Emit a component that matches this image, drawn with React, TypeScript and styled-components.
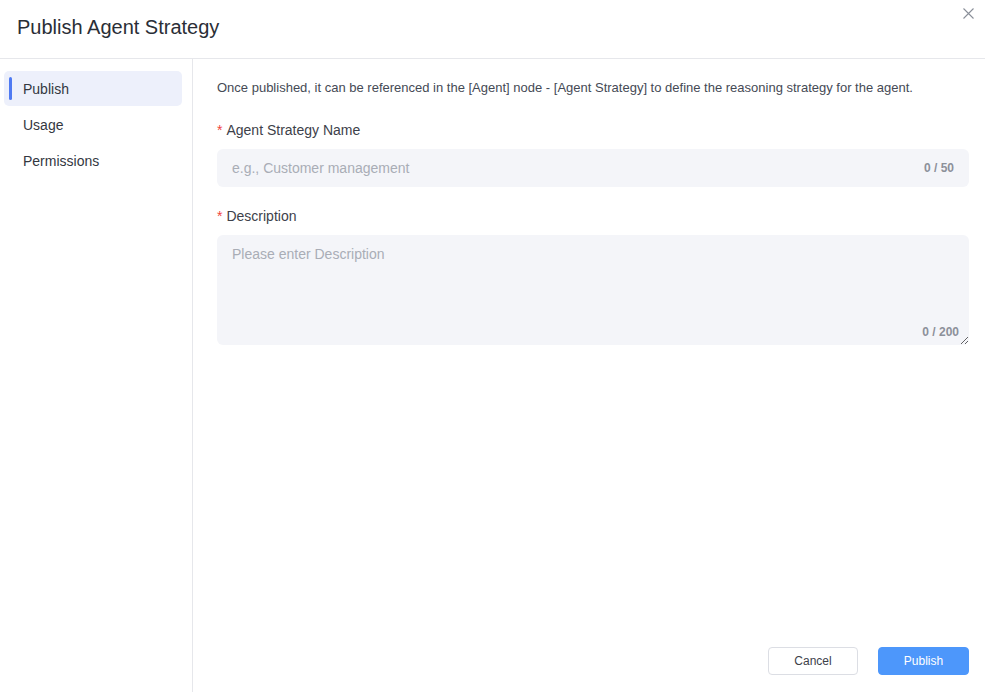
import React, { useState } from 'react';
import styled, { createGlobalStyle } from 'styled-components';

const GlobalStyle = createGlobalStyle`
  html, body {
    margin: 0;
    padding: 0;
    background: #fff;
  }
  body {
    font-family: "Liberation Sans", Arial, sans-serif;
  }
  * {
    box-sizing: border-box;
  }
`;

const navItems = ['Publish', 'Usage', 'Permissions'];

const App: React.FC = () => {
  const [active, setActive] = useState('Publish');
  const [name, setName] = useState('');
  const [desc, setDesc] = useState('');

  return (
    <>
      <GlobalStyle />
      <Dialog>
        <Header>
          <Title>Publish Agent Strategy</Title>
          <CloseButton aria-label="Close">
            <svg width="11" height="11" viewBox="0 0 11 11">
              <path d="M0.5 0.5 L10.5 10.5 M10.5 0.5 L0.5 10.5" stroke="#8a8f99" strokeWidth="1.1" />
            </svg>
          </CloseButton>
        </Header>
        <Body>
          <Sidebar>
            {navItems.map(item => (
              <NavItem key={item} $active={item === active} onClick={() => setActive(item)}>
                {item}
              </NavItem>
            ))}
          </Sidebar>
          <Main>
            <Form>
              <Intro>
                Once published, it can be referenced in the [Agent] node - [Agent Strategy] to define the reasoning
                strategy for the agent.
              </Intro>
              <Field>
                <Label>
                  <Required>*</Required>Agent Strategy Name
                </Label>
                <InputWrap>
                  <Input
                    value={name}
                    maxLength={50}
                    placeholder="e.g., Customer management"
                    onChange={e => setName(e.target.value)}
                  />
                  <Counter>{name.length} / 50</Counter>
                </InputWrap>
              </Field>
              <Field>
                <Label>
                  <Required>*</Required>Description
                </Label>
                <TextareaWrap>
                  <Textarea
                    value={desc}
                    maxLength={200}
                    placeholder="Please enter Description"
                    onChange={e => setDesc(e.target.value)}
                  />
                  <TextareaCounter>{desc.length} / 200</TextareaCounter>
                </TextareaWrap>
              </Field>
            </Form>
            <Footer>
              <Button>Cancel</Button>
              <Button $primary>Publish</Button>
            </Footer>
          </Main>
        </Body>
      </Dialog>
    </>
  );
};

const Dialog = styled.div`
  width: 985px;
  height: 692px;
  display: flex;
  flex-direction: column;
  background: #fff;
`;

const Header = styled.div`
  position: relative;
  height: 59px;
  flex-shrink: 0;
  display: flex;
  align-items: center;
  padding: 0 17px 4px;
  border-bottom: 1px solid #e6e7eb;
`;

const Title = styled.h1`
  margin: 0;
  font-size: 20px;
  font-weight: 400;
  color: #2a2e36;
`;

const CloseButton = styled.button`
  position: absolute;
  top: 8px;
  right: 11px;
  padding: 0;
  border: none;
  background: none;
  cursor: pointer;
  display: flex;
`;

const Body = styled.div`
  flex: 1;
  display: flex;
  min-height: 0;
`;

const Sidebar = styled.nav`
  width: 193px;
  flex-shrink: 0;
  border-right: 1px solid #e6e7eb;
  padding: 12px 10px 0 4px;
  display: flex;
  flex-direction: column;
  gap: 1px;
`;

const NavItem = styled.div<{ $active?: boolean }>`
  position: relative;
  height: 35px;
  display: flex;
  align-items: center;
  padding-left: 19px;
  border-radius: 5px;
  font-size: 14px;
  color: #33373f;
  cursor: pointer;
  background: ${p => (p.$active ? '#edf0fb' : 'transparent')};

  &::before {
    content: '';
    display: ${p => (p.$active ? 'block' : 'none')};
    position: absolute;
    left: 5px;
    top: 6px;
    bottom: 6px;
    width: 3px;
    border-radius: 2px;
    background: #4f7af2;
  }
`;

const Main = styled.div`
  flex: 1;
  display: flex;
  flex-direction: column;
  padding: 21px 16px 17px 24px;
`;

const Form = styled.div`
  flex: 1;
  display: flex;
  flex-direction: column;
`;

const Intro = styled.p`
  margin: 0 0 26px;
  font-size: 13px;
  line-height: 16px;
  color: #454a55;
`;

const Field = styled.div`
  display: flex;
  flex-direction: column;
  margin-bottom: 21px;
`;

const Label = styled.label`
  font-size: 14px;
  line-height: 16px;
  color: #3d414a;
  margin-bottom: 11px;
`;

const Required = styled.span`
  color: #f0453d;
  margin-right: 4px;
`;

const InputWrap = styled.div`
  position: relative;
  height: 38px;
  display: flex;
  align-items: center;
  background: #f4f5f9;
  border-radius: 6px;
`;

const Input = styled.input`
  flex: 1;
  height: 100%;
  border: none;
  outline: none;
  background: transparent;
  padding: 0 15px;
  font-family: inherit;
  font-size: 14px;
  color: #2a2e36;

  &::placeholder {
    color: #a9adb6;
  }
`;

const Counter = styled.span`
  padding-right: 15px;
  font-size: 12px;
  font-weight: 700;
  color: #8c9099;
`;

const TextareaWrap = styled.div`
  position: relative;
  height: 110px;
  background: #f4f5f9;
  border-radius: 6px;
`;

const Textarea = styled.textarea`
  width: 100%;
  height: 100%;
  border: none;
  outline: none;
  background: transparent;
  padding: 11px 15px;
  font-family: inherit;
  font-size: 14px;
  line-height: 16px;
  color: #2a2e36;
  resize: vertical;

  &::placeholder {
    color: #a9adb6;
  }
`;

const TextareaCounter = styled.span`
  position: absolute;
  right: 10px;
  bottom: 6px;
  font-size: 12px;
  font-weight: 700;
  color: #8c9099;
`;

const Footer = styled.div`
  display: flex;
  justify-content: flex-end;
  gap: 20px;
`;

const Button = styled.button<{ $primary?: boolean }>`
  width: ${p => (p.$primary ? '91px' : '90px')};
  height: 28px;
  border-radius: 4px;
  font-family: inherit;
  font-size: 12px;
  cursor: pointer;
  border: 1px solid ${p => (p.$primary ? '#4d97fb' : '#dcdee4')};
  background: ${p => (p.$primary ? '#4d97fb' : '#fff')};
  color: ${p => (p.$primary ? '#fff' : '#3d414a')};
`;

export default App;
